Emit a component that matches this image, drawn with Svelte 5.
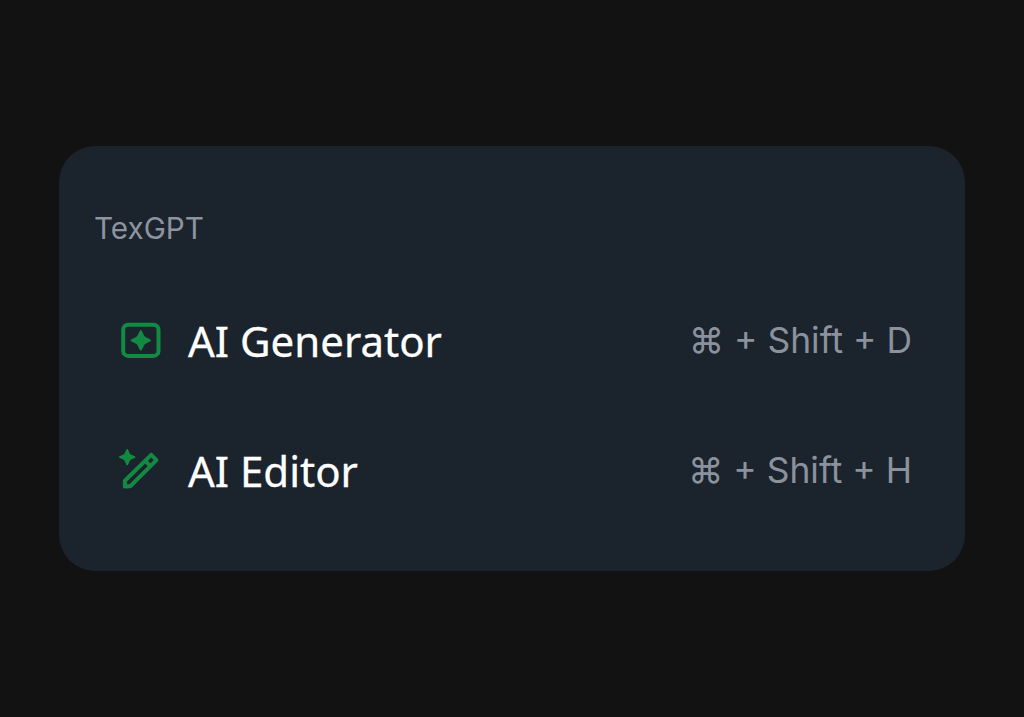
<script>
  const title = 'TexGPT';

  const items = [
    { id: 'generator', name: 'AI Generator', keys: '⌘ + Shift + D' },
    { id: 'editor', name: 'AI Editor', keys: '⌘ + Shift + H' },
  ];
</script>

<div class="page">
  <div class="menu">
    <h2>{title}</h2>

    {#each items as item}
      <button class="item">
        <svg class="icon" viewBox="0 0 44 44" fill="none">
          {#if item.id === 'generator'}
            <rect x="5.2" y="5.7" width="35.3" height="31.2" rx="5" stroke="currentColor" stroke-width="4" />
            <path d="M22.8 11 C24.2 11 25.3 16 26.9 17.4 C28.3 18.8 33.1 20 33.1 21.3 C33.1 22.6 28.3 23.8 26.9 25.2 C25.3 26.6 24.2 31.6 22.8 31.6 C21.4 31.6 20.3 26.6 18.7 25.2 C17.3 23.8 12.5 22.6 12.5 21.3 C12.5 20 17.3 18.8 18.7 17.4 C20.3 16 21.4 11 22.8 11Z" fill="currentColor" />
          {:else}
            <path d="M9.2 -0.3 C10.3 -0.3 11.2 4 12.3 5 C13.3 6.1 17.6 7 17.6 8.1 C17.6 9.2 13.3 10.1 12.3 11.2 C11.2 12.2 10.3 16.5 9.2 16.5 C8.1 16.5 7.2 12.2 6.1 11.2 C5.1 10.1 0.8 9.2 0.8 8.1 C0.8 7 5.1 6.1 6.1 5 C7.2 4 8.1 -0.3 9.2 -0.3Z" fill="currentColor" />
            <path d="M6.9 37.2 V31.8 L33.2 5.9 L38.5 11.2 L12.4 37.2Z" stroke="currentColor" stroke-width="4" stroke-linejoin="round" />
            <path d="M5 34 V39.2 H10Z" fill="currentColor" />
            <path d="M27.2 11.8 L32.6 17.2" stroke="currentColor" stroke-width="4" />
          {/if}
        </svg>
        <span class="name">{item.name}</span>
        <span class="keys">{item.keys}</span>
      </button>
    {/each}
  </div>
</div>

<style>
  :global(body) {
    background: #121212;
  }

  .page {
    display: flex;
    align-items: center;
    justify-content: center;
    height: 717px;
  }

  .menu {
    box-sizing: border-box;
    width: 906px;
    height: 425px;
    padding: 64px 35px 0;
    border-radius: 36px;
    background: #1b232c;
  }

  h2 {
    margin: 0 0 48px;
    font: 400 29.7px/36px Inter, sans-serif;
    color: #8d949f;
  }

  .item {
    display: flex;
    align-items: center;
    width: 100%;
    height: 94px;
    margin-bottom: 36px;
    padding: 0 18px 0 24px;
    border: none;
    background: none;
    text-align: left;
  }

  .icon {
    width: 44px;
    height: 44px;
    margin-right: 26px;
    color: #138a43;
    overflow: visible;
  }

  .name {
    flex: 1;
    font: 400 42px/56px 'Noto Sans', sans-serif;
    color: #ffffff;
    -webkit-text-stroke: 0.3px #ffffff;
  }

  .keys {
    font: 400 35.4px/44px Inter, sans-serif;
    color: #8b929d;
    white-space: pre;
  }
</style>
